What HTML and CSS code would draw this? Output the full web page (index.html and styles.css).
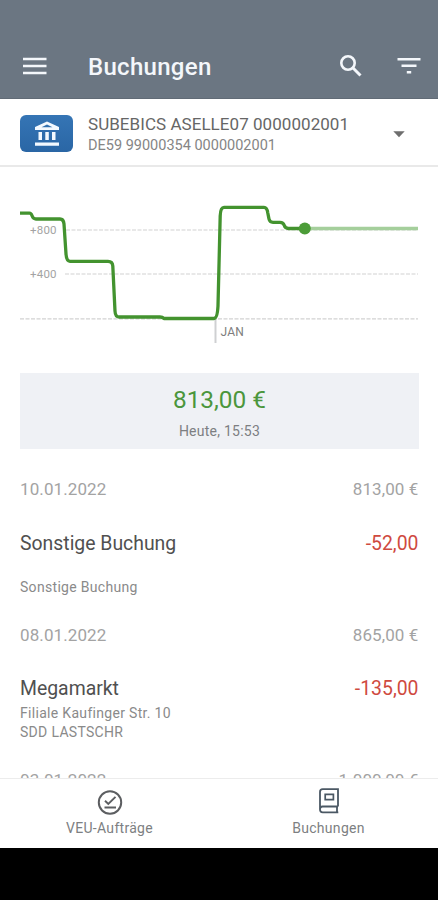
FILE: index.html
```html
<!DOCTYPE html>
<html lang="de">
<head>
<meta charset="utf-8">
<meta name="viewport" content="width=device-width">
<title>Buchungen</title>
<link rel="stylesheet" href="styles.css">
</head>
<body>
<div class="screen">
  <header class="appbar">
    <svg class="icon-menu" width="24" height="18" viewBox="0 0 24 18"><path d="M0 2h23.500M0 9h23.500M0 16h23.500" stroke="#f4f7fb" stroke-width="2.600"/></svg>
    <h1 class="title"><span>Buchungen</span></h1>
    <svg class="icon-search" width="24" height="24" viewBox="0 0 24 24" fill="none" stroke="#f4f7fb"><circle cx="9" cy="9" r="6.700" stroke-width="2.600"/><path d="M13.800 13.800L21.500 21.500" stroke-width="3"/></svg>
    <svg class="icon-filter" width="24" height="18" viewBox="0 0 24 18"><path d="M.5 2.200h23M4.500 8.700h15M9.800 15.200h4.400" stroke="#f4f7fb" stroke-width="2.500"/></svg>
  </header>

  <section class="account">
    <div class="bank">
      <svg width="26" height="28" viewBox="0 0 26 28"><path fill="#f3f9ff" fill-rule="evenodd" d="M13 1.500L25 7v3H1V7zM13 4.500L7.500 7.200h11zM4.500 12H8v8H4.500zM11.300 12h3.500v8h-3.500zM18 12h3.500v8H18zM1 22.500h24v3.200H1z"/></svg>
    </div>
    <div class="account-text">
      <div class="account-name"><span>SUBEBICS ASELLE07 0000002001</span></div>
      <div class="account-iban"><span>DE59 99000354 0000002001</span></div>
    </div>
    <svg class="caret" width="12" height="7" viewBox="0 0 12 7"><path d="M.3.300h11.400L6 6.300z" fill="#6e6e6e"/></svg>
  </section>

  <main class="content">
    <svg class="chart" width="438" height="206" viewBox="0 167 438 206">
      <g stroke="#d2d2d2" stroke-width="1.200" stroke-dasharray="4 1.500">
        <path d="M66 230H418M65 274H418M20 318.800H418"/>
      </g>
      <path d="M215.500 319v24" stroke="#cfd0d2" stroke-width="2"/>
      <text class="axis" x="30" y="234">+800</text>
      <text class="axis" x="30" y="278">+400</text>
      <text class="axis month" x="220.500" y="335.500">JAN</text>
      <path d="M305 228.500H418" stroke="#a5cf9c" stroke-width="3.600"/>
      <path d="M20 213.200H29.500C33 213.200 31 219 36 219H60Q63.500 219 64 224L66 254Q66.500 261.300 70 261.300H108Q112.500 261.300 112.800 266L115 311Q115.300 317 119 317H160Q162.500 317 164 318.500H214Q217.300 318.500 218 306L220.200 216Q220.500 207.400 224 207.400H264Q267 207.400 267.800 213L269 219Q269.700 222.300 273 222.300H280Q283.200 222.300 284.200 225.300Q285.200 228.500 288.500 228.500H305" fill="none" stroke="#43932f" stroke-width="3.300" stroke-linejoin="round"/>
      <circle cx="304.800" cy="228.500" r="6" fill="#4c9c38"/>
    </svg>

    <section class="balance">
      <div class="balance-amount"><span>813,00 €</span></div>
      <div class="balance-time"><span>Heute, 15:53</span></div>
    </section>

    <section class="bookings">
      <article class="booking">
        <div class="day"><span>10.01.2022</span><span>813,00 €</span></div>
        <div class="entry"><span>Sonstige Buchung</span><span class="debit">-52,00</span></div>
        <div class="detail"><br><span>Sonstige Buchung</span></div>
      </article>
      <article class="booking">
        <div class="day"><span>08.01.2022</span><span>865,00 €</span></div>
        <div class="entry"><span>Megamarkt</span><span class="debit">-135,00</span></div>
        <div class="detail"><span>Filiale Kaufinger Str. 10</span><br><span>SDD LASTSCHR</span></div>
      </article>
      <article class="booking">
        <div class="day"><span>03.01.2022</span><span>1.000,00 €</span></div>
      </article>
    </section>
  </main>

  <nav class="tabs">
    <a class="tab">
      <svg width="26" height="26" viewBox="0 0 26 26" fill="none" stroke="#5c5e61"><circle cx="13" cy="14.500" r="11.200" stroke-width="2"/><path d="M8 12.800l3.300 3.200 7.200-7.200M7.500 19.500h11.500" stroke-width="1.900"/></svg>
      <span>VEU-Aufträge</span>
    </a>
    <a class="tab">
      <svg width="26" height="26" viewBox="0 0 26 26" fill="none" stroke="#4b5864" stroke-width="1.800"><path d="M22 18.500V1.200H6.700Q4 1.200 4 3.900V21.500Q4 24.300 6.700 24.300H22.300M22 18.500H6.500Q4 18.500 4 21.200M21 18.500V24"/><path d="M9.200 6.300h8.200v5.400H9.200z" stroke-width="1.700"/></svg>
      <span>Buchungen</span>
    </a>
  </nav>
</div>
</body>
</html>
```
FILE: styles.css
```css
* { box-sizing: border-box; }

body {
  margin: 0;
  background: #000;
  font-family: Roboto, "Liberation Sans", sans-serif;
}

.screen {
  display: flex;
  flex-direction: column;
  width: 438px;
  height: 847.500px;
  overflow: hidden;
  background: #fff;
}

.appbar {
  display: flex;
  align-items: center;
  flex: none;
  height: 99px;
  padding: 33px 17px 0 23px;
  background: #6b7682;
  border-bottom: 1px solid #616b76;
}

.title {
  flex: 1;
  margin: 2px 0 0 41px;
  font-size: 24px;
  line-height: 30px;
  font-weight: 500;
  letter-spacing: .3px;
  color: #f4f7fb;
}

.icon-search { margin-right: 34px; }

.account {
  display: flex;
  align-items: center;
  flex: none;
  height: 68px;
  padding: 0 33px 0 20px;
  border-bottom: 2px solid #e9e9e9;
}

.bank {
  display: flex;
  align-items: center;
  justify-content: center;
  width: 53px;
  height: 37px;
  margin-top: 2px;
  padding-top: 1px;
  border-radius: 6px;
  background: linear-gradient(#3575b5, #2a66a5);
}

.account-text { flex: 1; margin: 6px 0 0 15px; white-space: nowrap; }
.account-name { font-size: 17px; line-height: 22px; letter-spacing: .05px; color: #666; }
.account-iban { font-size: 14.500px; line-height: 22px; color: #858585; }
.caret { margin-top: 4px; }

.content { flex: 1; min-height: 0; overflow: hidden; }
.chart { display: block; }
.axis { font-size: 11.500px; letter-spacing: .2px; fill: #a3a3a3; }
.month { font-size: 12px; fill: #7d7d7d; }

.balance {
  height: 76px;
  margin: 0 19px 0 20px;
  padding-top: 12px;
  background: #eff1f5;
  text-align: center;
}

.balance-amount { font-size: 24.400px; line-height: 30px; color: #4b963c; }
.balance-time { margin-top: 6px; font-size: 14px; line-height: 20px; letter-spacing: .25px; color: #7d7f82; }

.bookings { padding: 28px 19.500px 0 20px; }
.booking { height: 145.600px; }

.day, .entry { display: flex; justify-content: space-between; line-height: 24px; }
.day { font-size: 17px; letter-spacing: .1px; color: #a3a3a3; }
.entry { margin-top: 30.500px; font-size: 19.400px; color: #505050; }
.debit { color: #cf4a3f; }
.detail { margin-top: 2.500px; font-size: 14px; line-height: 19.500px; letter-spacing: .31px; color: #8a8a8a; }

.tabs {
  display: flex;
  flex: none;
  height: 69.500px;
  border-top: 1px solid #ececec;
  background: #fff;
}

.tab {
  display: flex;
  flex: 1;
  flex-direction: column;
  align-items: center;
  padding-top: 9px;
  font-size: 14px;
  line-height: 20px;
  letter-spacing: .3px;
  color: #7d7f82;
}

.tab svg { overflow: visible; }
.tab span { margin-top: 4px; }
```
